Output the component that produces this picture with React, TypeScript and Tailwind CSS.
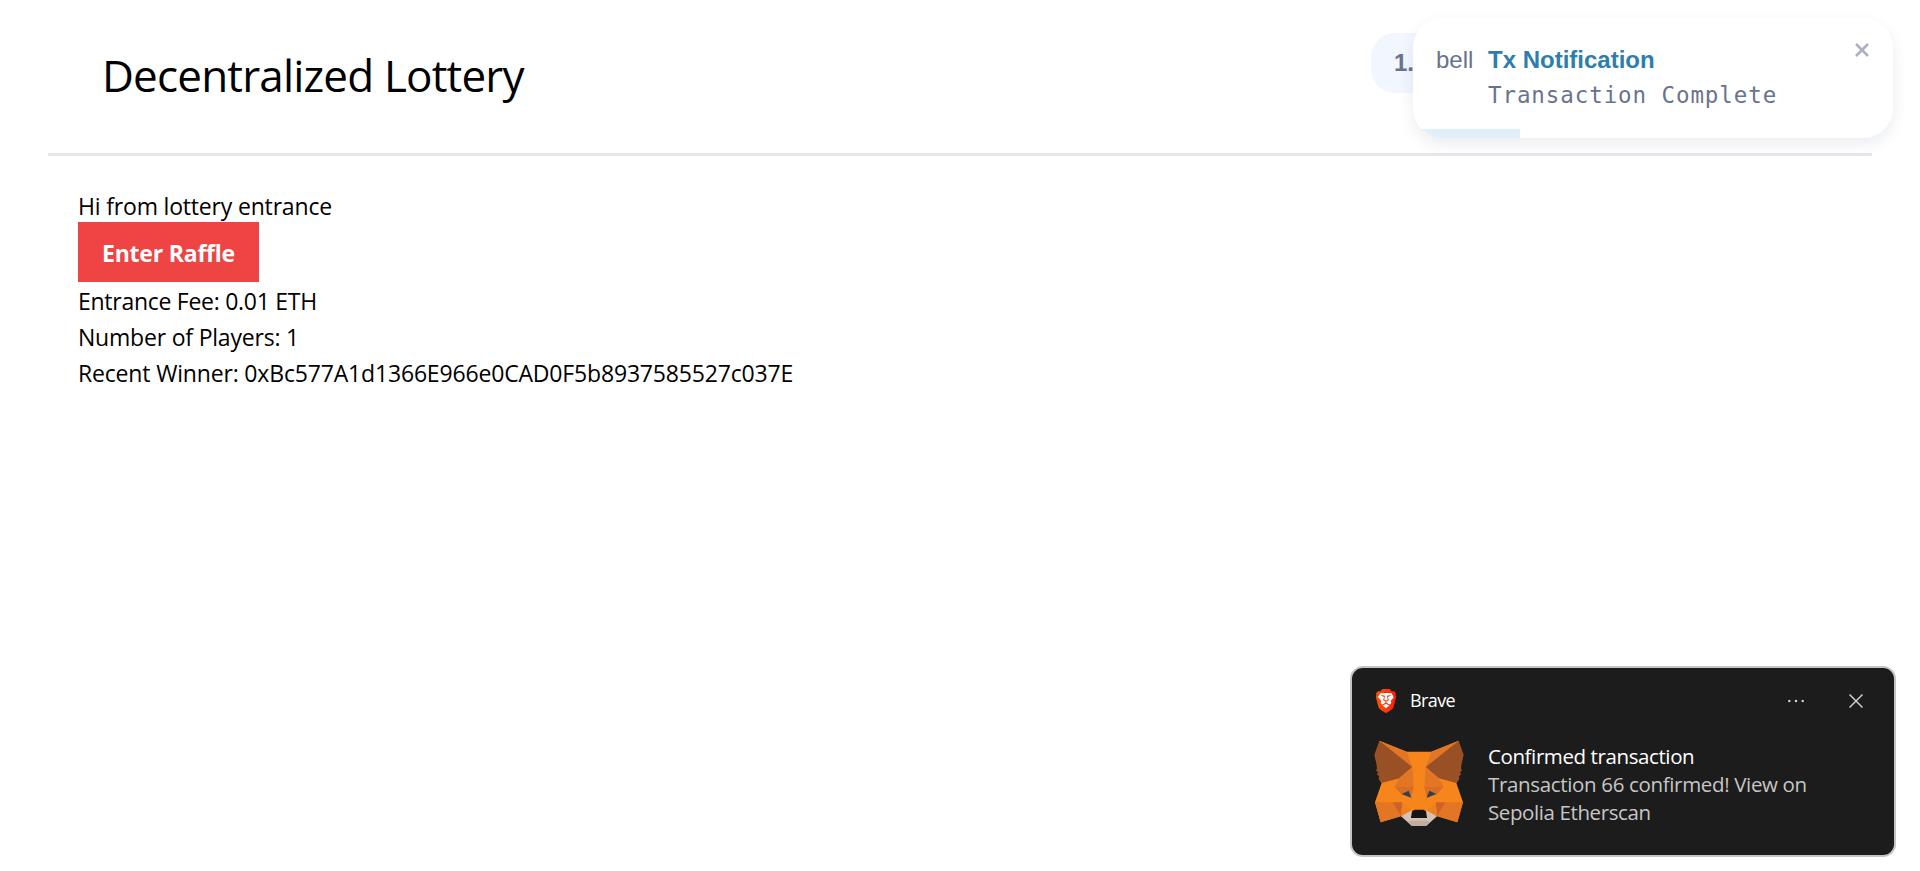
import React from "react";
import { SiBrave } from "react-icons/si";

function FoxHalf() {
  return (
    <>
      <polygon fill="#f6851b" points="43,33 125,66 163,66 163,242 148,242 108,260 47,278 30,218 50,160 42,148" />
      <polygon fill="#e27625" points="43,33 125,66 142,112" />
      <polygon fill="#995024" points="43,33 142,112 103,146 50,160 41,148 42,139 36,135 39,127 33,123 36,116 34,102 28,75" />
      <polygon fill="#e27625" points="142,112 103,146 88,171 146,171" />
      <polygon fill="#d86d27" points="88,171 146,171 138,204 108,194" />
      <polygon fill="#f6851b" points="88,171 108,194 112,219 82,219" />
      <polygon fill="#e27625" points="30,218 82,218 108,259 47,278" />
      <polygon fill="#cd6128" points="82,218 112,218 108,259" />
      <polygon fill="#f0801f" points="112,218 108,259 140,243" />
      <polygon fill="#2b4252" points="110,193 131,183 139,204" />
      <polygon fill="#d7c1b3" points="108,260 138,243 148,243 138,264 163,264 163,288 140,288" />
      <polygon fill="#c0ad9e" points="128,277 138,273 163,273 163,289 140,289" />
      <polygon fill="#161616" points="149,240 163,240 163,265 138,265 141,245" />
    </>
  );
}

function Fox() {
  return (
    <svg viewBox="27 31 270 261" className="h-[87px] w-[90px] shrink-0">
      <FoxHalf />
      <g transform="matrix(-1 0 0 1 324 0)">
        <FoxHalf />
      </g>
    </svg>
  );
}

function BraveIcon() {
  return (
    <span className="relative block h-6 w-[21px]">
      <svg viewBox="0 0 21 24" className="absolute inset-0 h-6 w-[21px]">
        <defs>
          <linearGradient id="brave" x1="0" x2="1" y1="0" y2="0">
            <stop offset="0" stopColor="#ff5500" />
            <stop offset="0.5" stopColor="#ff3a10" />
            <stop offset="1" stopColor="#ff1a05" />
          </linearGradient>
        </defs>
        <path d="M4 4h13l2 5-4 10-4.500 3L6 19 2 9z" fill="#fff" />
      </svg>
      <SiBrave className="absolute top-0 -left-[1.5px] size-6 fill-[url(#brave)] text-[#ff3a10]" />
    </span>
  );
}

function Header() {
  return (
    <header className="mx-12 flex h-[156px] items-start justify-between border-b-[3px] border-[#e5e7eb]">
      <h1 className="pt-[45px] pl-[54px] text-[44px] leading-[60px] tracking-[-0.82px]">Decentralized Lottery</h1>
      <div className="mt-[33px] mr-[141px] h-[60px] w-[360px] rounded-3xl bg-[#f2f6ff] pt-3 pl-[23px] font-['Liberation_Sans',sans-serif] text-2xl leading-9 font-bold text-[#68738d]">
        1.
      </div>
    </header>
  );
}

function LotteryEntrance() {
  return (
    <main className="flex flex-col items-start px-[78px] pt-8 text-[23px] leading-9 tracking-[-0.17px]">
      <p className="-mb-0.5 tracking-[-0.18px]">Hi from lottery entrance</p>
      <button className="h-[60px] w-[181px] bg-[#ef4444] pt-px font-bold tracking-[-0.21px] text-white">Enter Raffle</button>
      <p className="pt-px tracking-[-0.27px]">Entrance Fee: 0.01 ETH</p>
      <p className="tracking-[-0.2px]">Number of Players: 1</p>
      <p>Recent Winner: 0xBc577A1d1366E966e0CAD0F5b8937585527c037E</p>
    </main>
  );
}

function TxToast() {
  return (
    <div className="absolute top-[18px] right-[27px] flex h-[120px] w-[480px] overflow-hidden rounded-[30px] bg-white pl-[23px] font-['Liberation_Sans',sans-serif] text-2xl text-[#68738d]">
      <span className="w-[52px] pt-6 leading-9">bell</span>
      <div className="pt-6">
        <h4 className="leading-9 font-bold text-[#2e7daf]">Tx Notification</h4>
        <p className="font-['DejaVu_Sans_Mono',monospace] text-[22.5px] leading-[34px] tracking-[0.91px] whitespace-nowrap">
          Transaction Complete
        </p>
      </div>
      <svg viewBox="0 0 14 14" className="mt-[24.5px] mr-[24.5px] ml-auto size-[14px] text-[#aab0bf]" fill="none" stroke="currentColor" strokeWidth="2.5">
        <path d="M1 1l12 12M13 1L1 13" />
      </svg>
      <div className="absolute bottom-0 left-0 h-[9px] w-[107px] bg-[#e1effa]" />
    </div>
  );
}

function SystemToast() {
  return (
    <section className="absolute right-6 bottom-3.5 flex h-[191px] w-[546px] flex-col rounded-[13px] border-2 border-[#c4c4c4] bg-[#1c1c1c] pt-[21px] pr-[31px] pl-[22px]">
      <div className="flex h-6 items-center pl-px">
        <BraveIcon />
        <span className="-mt-0.5 ml-3.5 text-[18px] leading-6 tracking-[-0.6px] text-white">Brave</span>
        <svg viewBox="0 0 16 4" className="mr-[45px] ml-auto h-1 w-4" fill="#cfcfcf">
          <circle cx="1.300" cy="2" r="1.250" />
          <circle cx="8" cy="2" r="1.250" />
          <circle cx="14.700" cy="2" r="1.250" />
        </svg>
        <svg viewBox="0 0 14 14" className="size-[14px]" fill="none" stroke="#cfcfcf" strokeWidth="1.500">
          <path d="M.500.500l13 13M13.500.500l-13 13" />
        </svg>
      </div>
      <div className="flex pt-[27px]">
        <Fox />
        <div className="ml-6 pt-0.5 text-[20.5px] leading-7 text-[#c6c6c6]">
          <p className="tracking-[-0.4px] text-white">Confirmed transaction</p>
          <p className="tracking-[-0.34px]">Transaction 66 confirmed! View on</p>
          <p className="tracking-[-0.4px]">Sepolia Etherscan</p>
        </div>
      </div>
    </section>
  );
}

export default function App() {
  return (
    <div className="relative h-[871px] w-[1920px] overflow-hidden bg-white font-['Open_Sans',sans-serif] text-black">
      <Header />
      <LotteryEntrance />
      <div className="absolute top-[18px] right-[27px] h-[120px] w-[480px] rounded-[30px] shadow-[0_6px_15px_rgba(48,71,105,0.1)]" />
      <TxToast />
      <SystemToast />
    </div>
  );
}
